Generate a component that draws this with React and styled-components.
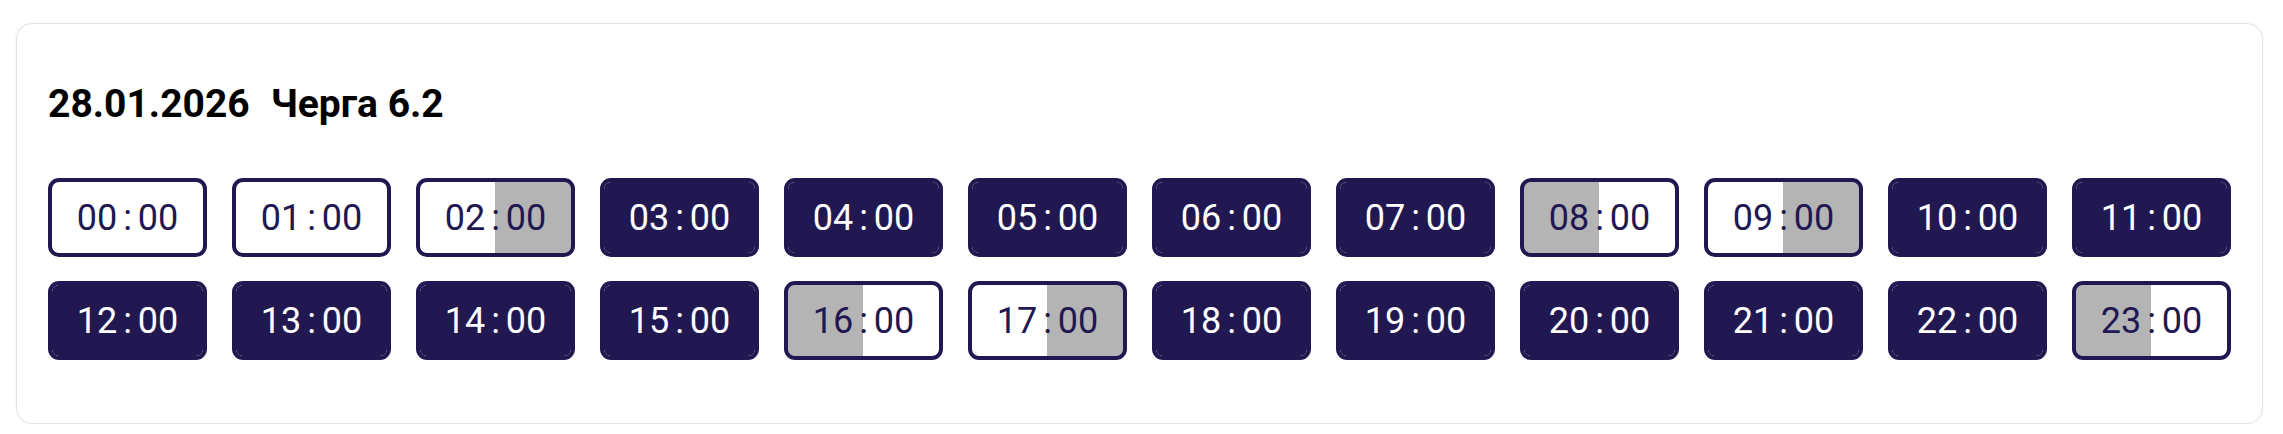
import React from 'react';
import styled, { createGlobalStyle } from 'styled-components';

const GlobalStyle = createGlobalStyle`
    body {
        margin: 0;
        background: #ffffff;
        font-family: Roboto, "Noto Sans", "Liberation Sans", sans-serif;
    }
`

// off - світло є, on - відключення, first/second - відключення на пів години
const slots = [
    'off', 'off', 'second', 'on', 'on', 'on', 'on', 'on', 'first', 'second', 'on', 'on',
    'on', 'on', 'on', 'on', 'first', 'second', 'on', 'on', 'on', 'on', 'on', 'first',
];

const pad = (n) => String(n).padStart(2, '0');

const Schedule = () => {
    return (
        <Card>
            <Title>
                <span>28.01.2026</span>
                <span>Черга 6.2</span>
            </Title>
            <Grid>
                {slots.map((state, hour) => (
                    <Slot key={hour} $state={state}>
                        <span>{pad(hour)}</span>
                        <span>:</span>
                        <span>00</span>
                    </Slot>
                ))}
            </Grid>
        </Card>
    );
};

const App = () => (
    <>
        <GlobalStyle />
        <Schedule />
    </>
);

export default App;

const NAVY = '#211852';
const GRAY = '#b4b4b4';

const backgrounds = {
    off: '#ffffff',
    on: NAVY,
    first: `linear-gradient(to right, ${GRAY} 50%, #ffffff 50%)`,
    second: `linear-gradient(to right, #ffffff 50%, ${GRAY} 50%)`,
};

const Card = styled.div`
    margin: 23px 20px 0 16px;
    padding: 61px 31px 63px 31px;
    border: 1px solid #e4e4e4;
    border-radius: 16px;
    box-shadow: 0 0 3px rgba(0, 0, 0, 0.06);
    background: #ffffff;
`
const Title = styled.h2`
    display: flex;
    gap: 21px;
    margin: 0 0 54px 0;
    font-size: 39px;
    line-height: 39px;
    font-weight: 700;
    color: #000000;
`
const Grid = styled.div`
    display: grid;
    grid-template-columns: repeat(12, 1fr);
    column-gap: 25px;
    row-gap: 24px;
`
const Slot = styled.div`
    box-sizing: border-box;
    height: 79px;
    display: flex;
    align-items: center;
    justify-content: center;
    gap: 6px;
    border: 4px solid ${NAVY};
    border-radius: 11px;
    background: ${({ $state }) => backgrounds[$state]};
    background-clip: padding-box;
    color: ${({ $state }) => ($state === 'on' ? '#ffffff' : NAVY)};
    font-size: 36px;
    font-weight: 400;
    line-height: 1;
`
